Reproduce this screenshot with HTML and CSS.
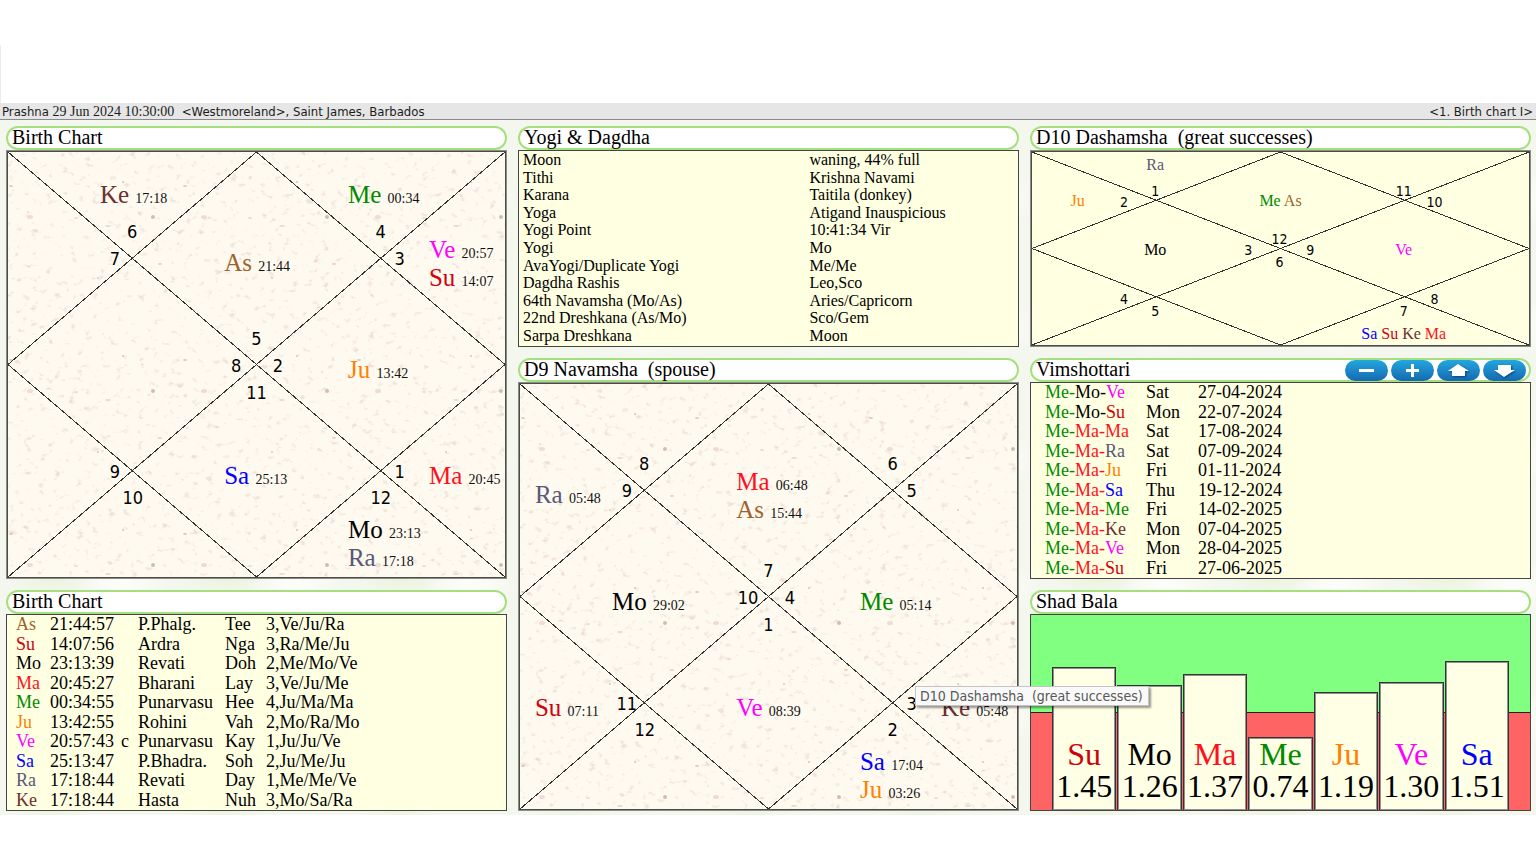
FILE: index.html
```
<!DOCTYPE html>
<html lang="en">
<head>
<meta charset="utf-8">
<title>Prashna - Birth chart I</title>
<link rel="stylesheet" href="styles.css">
</head>
<body>
<svg class="defs" aria-hidden="true">
  <defs>
    <filter id="grain" x="0" y="0" width="100%" height="100%">
      <feTurbulence type="fractalNoise" baseFrequency="0.13 0.17" numOctaves="3" seed="7" stitchTiles="stitch"/>
      <feColorMatrix values="0 0 0 0 0.84  0 0 0 0 0.72  0 0 0 0 0.65  4 0 0 0 -2.45"/>
    </filter>
    <pattern id="paper" width="174" height="174" patternUnits="userSpaceOnUse">
      <circle cx="145" cy="65" r="2" fill="#d3bdb0"/>
      <ellipse cx="22" cy="65" rx="3" ry="2" fill="#f0dcd4"/>
      <ellipse cx="68" cy="66" rx="2" ry="1" fill="#ead9d2"/>
      <circle cx="115" cy="30" r="1" fill="#cfc6ba"/>
      <circle cx="90" cy="126" r="1" fill="#d8c8bc"/>
      <ellipse cx="152" cy="112" rx="2" ry="1" fill="#f0cdb6"/>
      <ellipse cx="3" cy="34" rx="2" ry="1" fill="#e6c8ba"/>
      <ellipse cx="100" cy="74" rx="3" ry="1" fill="#e6dccf"/>
    </pattern>
    <symbol id="houses">
      <g class="lines">
        <line x1="0" y1="0" x2="100%" y2="100%"/>
        <line x1="100%" y1="0" x2="0" y2="100%"/>
        <line x1="50%" y1="0" x2="100%" y2="50%"/>
        <line x1="100%" y1="50%" x2="50%" y2="100%"/>
        <line x1="50%" y1="100%" x2="0" y2="50%"/>
        <line x1="0" y1="50%" x2="50%" y2="0"/>
      </g>
    </symbol>
  </defs>
</svg>

<div class="blank"></div>
<header class="titlebar">
  <div>Prashna <time datetime="2024-06-29T10:30">29 Jun 2024 10:30:00</time>&nbsp; &lt;Westmoreland&gt;, Saint James, Barbados</div>
  <div>&lt;1. Birth chart I&gt;</div>
</header>

<main class="dashboard">
  <section class="panel tall">
    <h2 class="title">Birth Chart</h2>
    <div class="body framed">
      <svg class="chart">
        <rect width="100%" height="100%" fill="#fffaf0"/>
        <rect width="100%" height="100%" filter="url(#grain)"/>
        <rect width="100%" height="100%" fill="url(#paper)"/>
        <use href="#houses" width="100%" height="100%"/>
        <g class="num">
          <text x="50%" y="45.3%">5</text><text x="25%" y="20.2%">6</text><text x="21.5%" y="26.5%">7</text>
          <text x="45.9%" y="51.7%">8</text><text x="21.5%" y="76.8%">9</text><text x="25.1%" y="82.9%">10</text>
          <text x="50%" y="58.1%">11</text><text x="75%" y="82.9%">12</text><text x="78.8%" y="76.8%">1</text>
          <text x="54.3%" y="51.7%">2</text><text x="78.8%" y="26.5%">3</text><text x="75%" y="20.2%">4</text>
        </g>
        <g class="planet">
          <text x="18.5%" y="12%" class="ke">Ke <tspan class="deg">17:18</tspan></text>
          <text x="68.4%" y="12%" class="me">Me <tspan class="deg">00:34</tspan></text>
          <text x="43.5%" y="28.1%" class="as">As <tspan class="deg">21:44</tspan></text>
          <text x="84.7%" y="24.9%" class="ve">Ve <tspan class="deg">20:57</tspan></text>
          <text x="84.7%" y="31.5%" class="su">Su <tspan class="deg">14:07</tspan></text>
          <text x="68.4%" y="53.1%" class="ju">Ju <tspan class="deg">13:42</tspan></text>
          <text x="43.5%" y="78.1%" class="sa">Sa <tspan class="deg">25:13</tspan></text>
          <text x="84.7%" y="78.1%" class="ma">Ma <tspan class="deg">20:45</tspan></text>
          <text x="68.4%" y="90.9%" class="mo">Mo <tspan class="deg">23:13</tspan></text>
          <text x="68.4%" y="97.4%" class="ra">Ra <tspan class="deg">17:18</tspan></text>
        </g>
      </svg>
    </div>
  </section>

  <section class="panel">
    <h2 class="title">Yogi &amp; Dagdha</h2>
    <div class="body">
      <table class="grid yogi">
        <tr><td>Moon</td><td>waning, 44% full</td></tr>
        <tr><td>Tithi</td><td>Krishna Navami</td></tr>
        <tr><td>Karana</td><td>Taitila (donkey)</td></tr>
        <tr><td>Yoga</td><td>Atigand Inauspicious</td></tr>
        <tr><td>Yogi Point</td><td>10:41:34 Vir</td></tr>
        <tr><td>Yogi</td><td>Mo</td></tr>
        <tr><td>AvaYogi/Duplicate Yogi</td><td>Me/Me</td></tr>
        <tr><td>Dagdha Rashis</td><td>Leo,Sco</td></tr>
        <tr><td>64th Navamsha (Mo/As)</td><td>Aries/Capricorn</td></tr>
        <tr><td>22nd Dreshkana (As/Mo)</td><td>Sco/Gem</td></tr>
        <tr><td>Sarpa Dreshkana</td><td>Moon</td></tr>
      </table>
    </div>
  </section>

  <section class="panel">
    <h2 class="title">D10 Dashamsha&nbsp; (great successes)</h2>
    <div class="body framed">
      <svg class="chart small">
        <use href="#houses" width="100%" height="100%"/>
        <g class="num">
          <text x="49.8%" y="47.7%">12</text><text x="24.8%" y="22.8%">1</text><text x="18.5%" y="28.7%">2</text>
          <text x="43.5%" y="53.6%">3</text><text x="18.5%" y="78.6%">4</text><text x="24.8%" y="84.8%">5</text>
          <text x="49.8%" y="59.8%">6</text><text x="74.8%" y="84.8%">7</text><text x="81%" y="78.6%">8</text>
          <text x="56%" y="53.6%">9</text><text x="81%" y="28.7%">10</text><text x="74.8%" y="22.8%">11</text>
        </g>
        <g class="planet">
          <text x="24.8%" y="9.4%" class="ra">Ra</text>
          <text x="9.2%" y="28.1%" class="ju">Ju</text>
          <text x="50%" y="28.1%" class="me">Me <tspan class="as">As</tspan></text>
          <text x="24.8%" y="53.3%" class="mo">Mo</text>
          <text x="74.8%" y="53.3%" class="ve">Ve</text>
          <text x="74.8%" y="96.8%" class="sa">Sa <tspan class="su">Su</tspan> <tspan class="ke">Ke</tspan> <tspan class="ma">Ma</tspan></text>
        </g>
      </svg>
    </div>
  </section>

  <section class="panel tall">
    <h2 class="title">D9 Navamsha&nbsp; (spouse)</h2>
    <div class="body framed">
      <svg class="chart">
        <rect width="100%" height="100%" fill="#fffaf0"/>
        <rect width="100%" height="100%" filter="url(#grain)"/>
        <rect width="100%" height="100%" fill="url(#paper)"/>
        <use href="#houses" width="100%" height="100%"/>
        <g class="num">
          <text x="50%" y="45.3%">7</text><text x="25%" y="20.2%">8</text><text x="21.5%" y="26.5%">9</text>
          <text x="45.9%" y="51.7%">10</text><text x="21.5%" y="76.8%">11</text><text x="25.1%" y="82.9%">12</text>
          <text x="50%" y="58.1%">1</text><text x="75%" y="82.9%">2</text><text x="78.8%" y="76.8%">3</text>
          <text x="54.3%" y="51.7%">4</text><text x="78.8%" y="26.5%">5</text><text x="75%" y="20.2%">6</text>
        </g>
        <g class="planet">
          <text x="3%" y="28.1%" class="ra">Ra <tspan class="deg">05:48</tspan></text>
          <text x="43.5%" y="24.9%" class="ma">Ma <tspan class="deg">06:48</tspan></text>
          <text x="43.5%" y="31.5%" class="as">As <tspan class="deg">15:44</tspan></text>
          <text x="18.5%" y="53.1%" class="mo">Mo <tspan class="deg">29:02</tspan></text>
          <text x="68.4%" y="53.1%" class="me">Me <tspan class="deg">05:14</tspan></text>
          <text x="3%" y="78.1%" class="su">Su <tspan class="deg">07:11</tspan></text>
          <text x="43.5%" y="78.1%" class="ve">Ve <tspan class="deg">08:39</tspan></text>
          <text x="84.7%" y="78.1%" class="ke">Ke <tspan class="deg">05:48</tspan></text>
          <text x="68.4%" y="90.9%" class="sa">Sa <tspan class="deg">17:04</tspan></text>
          <text x="68.4%" y="97.4%" class="ju">Ju <tspan class="deg">03:26</tspan></text>
        </g>
      </svg>
    </div>
  </section>

  <section class="panel">
    <div class="title">
      <h2>Vimshottari</h2>
      <div class="tools">
        <button type="button" aria-label="Fewer levels"><svg viewBox="0 0 43 21"><path d="M14 9h15v3H14z"/></svg></button>
        <button type="button" aria-label="More levels"><svg viewBox="0 0 43 21"><path d="M20 4h3v5h5v3h-5v5h-3v-5h-5V9h5z"/></svg></button>
        <button type="button" aria-label="Earlier"><svg viewBox="0 0 43 21"><path class="arrow" d="M21 4 32 11h-4v5H15v-5h-4z"/></svg></button>
        <button type="button" aria-label="Later"><svg viewBox="0 0 43 21"><path class="arrow" d="M15 5h13v5h4L21 17 11 10h4z"/></svg></button>
      </div>
    </div>
    <div class="body">
      <table class="grid dasha">
        <tr><td><b class="me">Me-</b>Mo-<b class="ve">Ve</b></td><td>Sat</td><td>27-04-2024</td></tr>
        <tr><td><b class="me">Me-</b>Mo-<b class="su">Su</b></td><td>Mon</td><td>22-07-2024</td></tr>
        <tr><td><b class="me">Me-</b><b class="ma">Ma-Ma</b></td><td>Sat</td><td>17-08-2024</td></tr>
        <tr><td><b class="me">Me-</b><b class="ma">Ma-</b><b class="ra">Ra</b></td><td>Sat</td><td>07-09-2024</td></tr>
        <tr><td><b class="me">Me-</b><b class="ma">Ma-</b><b class="ju">Ju</b></td><td>Fri</td><td>01-11-2024</td></tr>
        <tr><td><b class="me">Me-</b><b class="ma">Ma-</b><b class="sa">Sa</b></td><td>Thu</td><td>19-12-2024</td></tr>
        <tr><td><b class="me">Me-</b><b class="ma">Ma-</b><b class="me">Me</b></td><td>Fri</td><td>14-02-2025</td></tr>
        <tr><td><b class="me">Me-</b><b class="ma">Ma-</b><b class="ke">Ke</b></td><td>Mon</td><td>07-04-2025</td></tr>
        <tr><td><b class="me">Me-</b><b class="ma">Ma-</b><b class="ve">Ve</b></td><td>Mon</td><td>28-04-2025</td></tr>
        <tr><td><b class="me">Me-</b><b class="ma">Ma-</b><b class="su">Su</b></td><td>Fri</td><td>27-06-2025</td></tr>
      </table>
    </div>
  </section>

  <section class="panel">
    <h2 class="title">Birth Chart</h2>
    <div class="body">
      <table class="grid birth">
        <tr><td class="as">As</td><td>21:44:57</td><td></td><td>P.Phalg.</td><td>Tee</td><td>3,Ve/Ju/Ra</td></tr>
        <tr><td class="su">Su</td><td>14:07:56</td><td></td><td>Ardra</td><td>Nga</td><td>3,Ra/Me/Ju</td></tr>
        <tr><td class="mo">Mo</td><td>23:13:39</td><td></td><td>Revati</td><td>Doh</td><td>2,Me/Mo/Ve</td></tr>
        <tr><td class="ma">Ma</td><td>20:45:27</td><td></td><td>Bharani</td><td>Lay</td><td>3,Ve/Ju/Me</td></tr>
        <tr><td class="me">Me</td><td>00:34:55</td><td></td><td>Punarvasu</td><td>Hee</td><td>4,Ju/Ma/Ma</td></tr>
        <tr><td class="ju">Ju</td><td>13:42:55</td><td></td><td>Rohini</td><td>Vah</td><td>2,Mo/Ra/Mo</td></tr>
        <tr><td class="ve">Ve</td><td>20:57:43</td><td>c</td><td>Punarvasu</td><td>Kay</td><td>1,Ju/Ju/Ve</td></tr>
        <tr><td class="sa">Sa</td><td>25:13:47</td><td></td><td>P.Bhadra.</td><td>Soh</td><td>2,Ju/Me/Ju</td></tr>
        <tr><td class="ra">Ra</td><td>17:18:44</td><td></td><td>Revati</td><td>Day</td><td>1,Me/Me/Ve</td></tr>
        <tr><td class="ke">Ke</td><td>17:18:44</td><td></td><td>Hasta</td><td>Nuh</td><td>3,Mo/Sa/Ra</td></tr>
      </table>
    </div>
  </section>

  <section class="panel">
    <h2 class="title">Shad Bala</h2>
    <div class="body bars">
      <div class="bar" style="height:73.5%"><span class="su">Su</span><span>1.45</span></div>
      <div class="bar" style="height:64%"><span class="mo">Mo</span><span>1.26</span></div>
      <div class="bar" style="height:69.5%"><span class="ma">Ma</span><span>1.37</span></div>
      <div class="bar" style="height:37.5%"><span class="me">Me</span><span>0.74</span></div>
      <div class="bar" style="height:60.3%"><span class="ju">Ju</span><span>1.19</span></div>
      <div class="bar" style="height:65.7%"><span class="ve">Ve</span><span>1.30</span></div>
      <div class="bar" style="height:76.5%"><span class="sa">Sa</span><span>1.51</span></div>
    </div>
  </section>

  <div class="tooltip" role="tooltip">D10 Dashamsha&nbsp; (great successes)</div>
</main>
</body>
</html>
```
FILE: styles.css
```
* { box-sizing: border-box; }

body {
  margin: 0;
  background: #fff;
  color: #000;
  font-family: "Liberation Serif", "Times New Roman", serif;
}

.defs { position: absolute; width: 0; height: 0; }

.blank {
  height: 58px;
  margin-top: 45px;
  border-left: 1px solid #ececec;
}

.titlebar {
  display: flex;
  justify-content: space-between;
  height: 17px;
  padding: 0 3px 0 2px;
  background: #e6e6e6;
  border-bottom: 1px solid #8a8a8a;
  font: 13px/17px "DejaVu Sans Condensed", "Noto Sans", sans-serif;
  color: #1c1c1c;
  white-space: nowrap;
}
.titlebar time { font-family: "Liberation Serif", serif; font-size: 14px; }

.dashboard {
  position: relative;
  display: grid;
  grid-template-columns: repeat(3, minmax(0, 1fr));
  grid-template-rows: repeat(3, minmax(221px, auto));
  gap: 11px;
  padding: 6px 5px 4px 6px;
  background:
    radial-gradient(ellipse at 30% 45%, #e9f2d6 0, transparent 28%) 0 0 / 174px 130px,
    radial-gradient(ellipse at 70% 60%, #fdfefb 0, transparent 28%) 0 0 / 174px 130px,
    #f4f7ee;
}

.panel { display: flex; flex-direction: column; min-width: 0; }
.tall { grid-row: span 2; }

.title {
  display: flex;
  align-items: center;
  justify-content: space-between;
  height: 24px;
  margin: 0;
  padding: 0 3px 0 4px;
  background: #fff;
  border: 2px solid #a6e07e;
  border-radius: 12px;
  font-size: 20px;
  font-weight: 400;
  line-height: 18px;
}
h2.title { padding-bottom: 2px; }
.title h2 { margin: 0; padding-bottom: 2px; font: inherit; }

.tools { display: flex; gap: 3px; }
.tools button {
  width: 43px;
  height: 21px;
  padding: 0;
  border: 0;
  border-radius: 11px;
  background: linear-gradient(#23a7de, #1668b0);
}
.tools svg { display: block; width: 43px; height: 21px; fill: #fff; }
.tools .arrow { filter: drop-shadow(1px 1px 1px #0a3f78); }

.body {
  flex: 1;
  min-height: 0;
  background: #ffffe2;
  border: 1px solid #444;
}
.framed { border: 2px solid #4c4c48; outline: 1px solid #8c8c86; outline-offset: -1px; }

.chart { display: block; width: 100%; height: 100%; }
.lines { stroke: #333; shape-rendering: crispEdges; }
.num { font: 18px "DejaVu Sans Condensed", "Noto Sans", sans-serif; text-anchor: middle; }
.planet { font-size: 25px; }
.deg { font-size: 14px; fill: #111; }
.small .num { font-size: 14px; }
.small .planet { font-size: 16px; text-anchor: middle; }

.grid {
  width: 100%;
  height: 100%;
  border-collapse: collapse;
  table-layout: fixed;
  font-size: 18px;
  line-height: 19px;
  white-space: nowrap;
}
.grid td { padding: 0; }
.grid b { font-weight: 400; }

.yogi { height: 99%; font-size: 16px; line-height: 17px; }
.yogi td:first-child { width: 58%; padding-left: 4px; }
.yogi td:last-child { padding-left: 1px; }

.dasha td:first-child { width: 115px; padding-left: 14px; }
.dasha td:nth-child(2) { width: 52px; }

.birth td:nth-child(1) { width: 43px; padding-left: 9px; }
.birth td:nth-child(2) { width: 71px; }
.birth td:nth-child(3) { width: 17px; }
.birth td:nth-child(4) { width: 87px; }
.birth td:nth-child(5) { width: 41px; }

.bars {
  display: flex;
  align-items: flex-end;
  gap: 1px;
  padding: 0 21px;
  background:
    linear-gradient(#222, #222) 0 50% / 100% 1px no-repeat,
    linear-gradient(#80ff80 50%, #ff6464 50%);
}
.bar {
  flex: 1;
  display: flex;
  flex-direction: column;
  justify-content: flex-end;
  min-width: 0;
  padding-bottom: 8px;
  background: #ffffe6;
  border: 1px solid #333;
  border-bottom: 0;
  box-shadow: inset 0 0 0 1px #909090;
  font-size: 32px;
  line-height: 32px;
  text-align: center;
}

.tooltip {
  position: absolute;
  left: 915px;
  top: 566px;
  height: 20px;
  padding: 0 5px 0 4px;
  background: #f9f9f9;
  border: 1px solid #c4c4c4;
  box-shadow: 2px 2px 2px rgba(0, 0, 0, 0.4);
  font: 14px/18px "DejaVu Sans Condensed", "Noto Sans", sans-serif;
  color: #575757;
  white-space: nowrap;
}

.as { color: #a0622d; fill: #a0622d; }
.su { color: #d0000c; fill: #d0000c; }
.mo { color: #000; fill: #000; }
.ma { color: #ff1020; fill: #ff1020; }
.me { color: #008a00; fill: #008a00; }
.ju { color: #ff8000; fill: #ff8000; }
.ve { color: #ff00ff; fill: #ff00ff; }
.sa { color: #0000ff; fill: #0000ff; }
.ra { color: #585878; fill: #585878; }
.ke { color: #6b3030; fill: #6b3030; }
```
